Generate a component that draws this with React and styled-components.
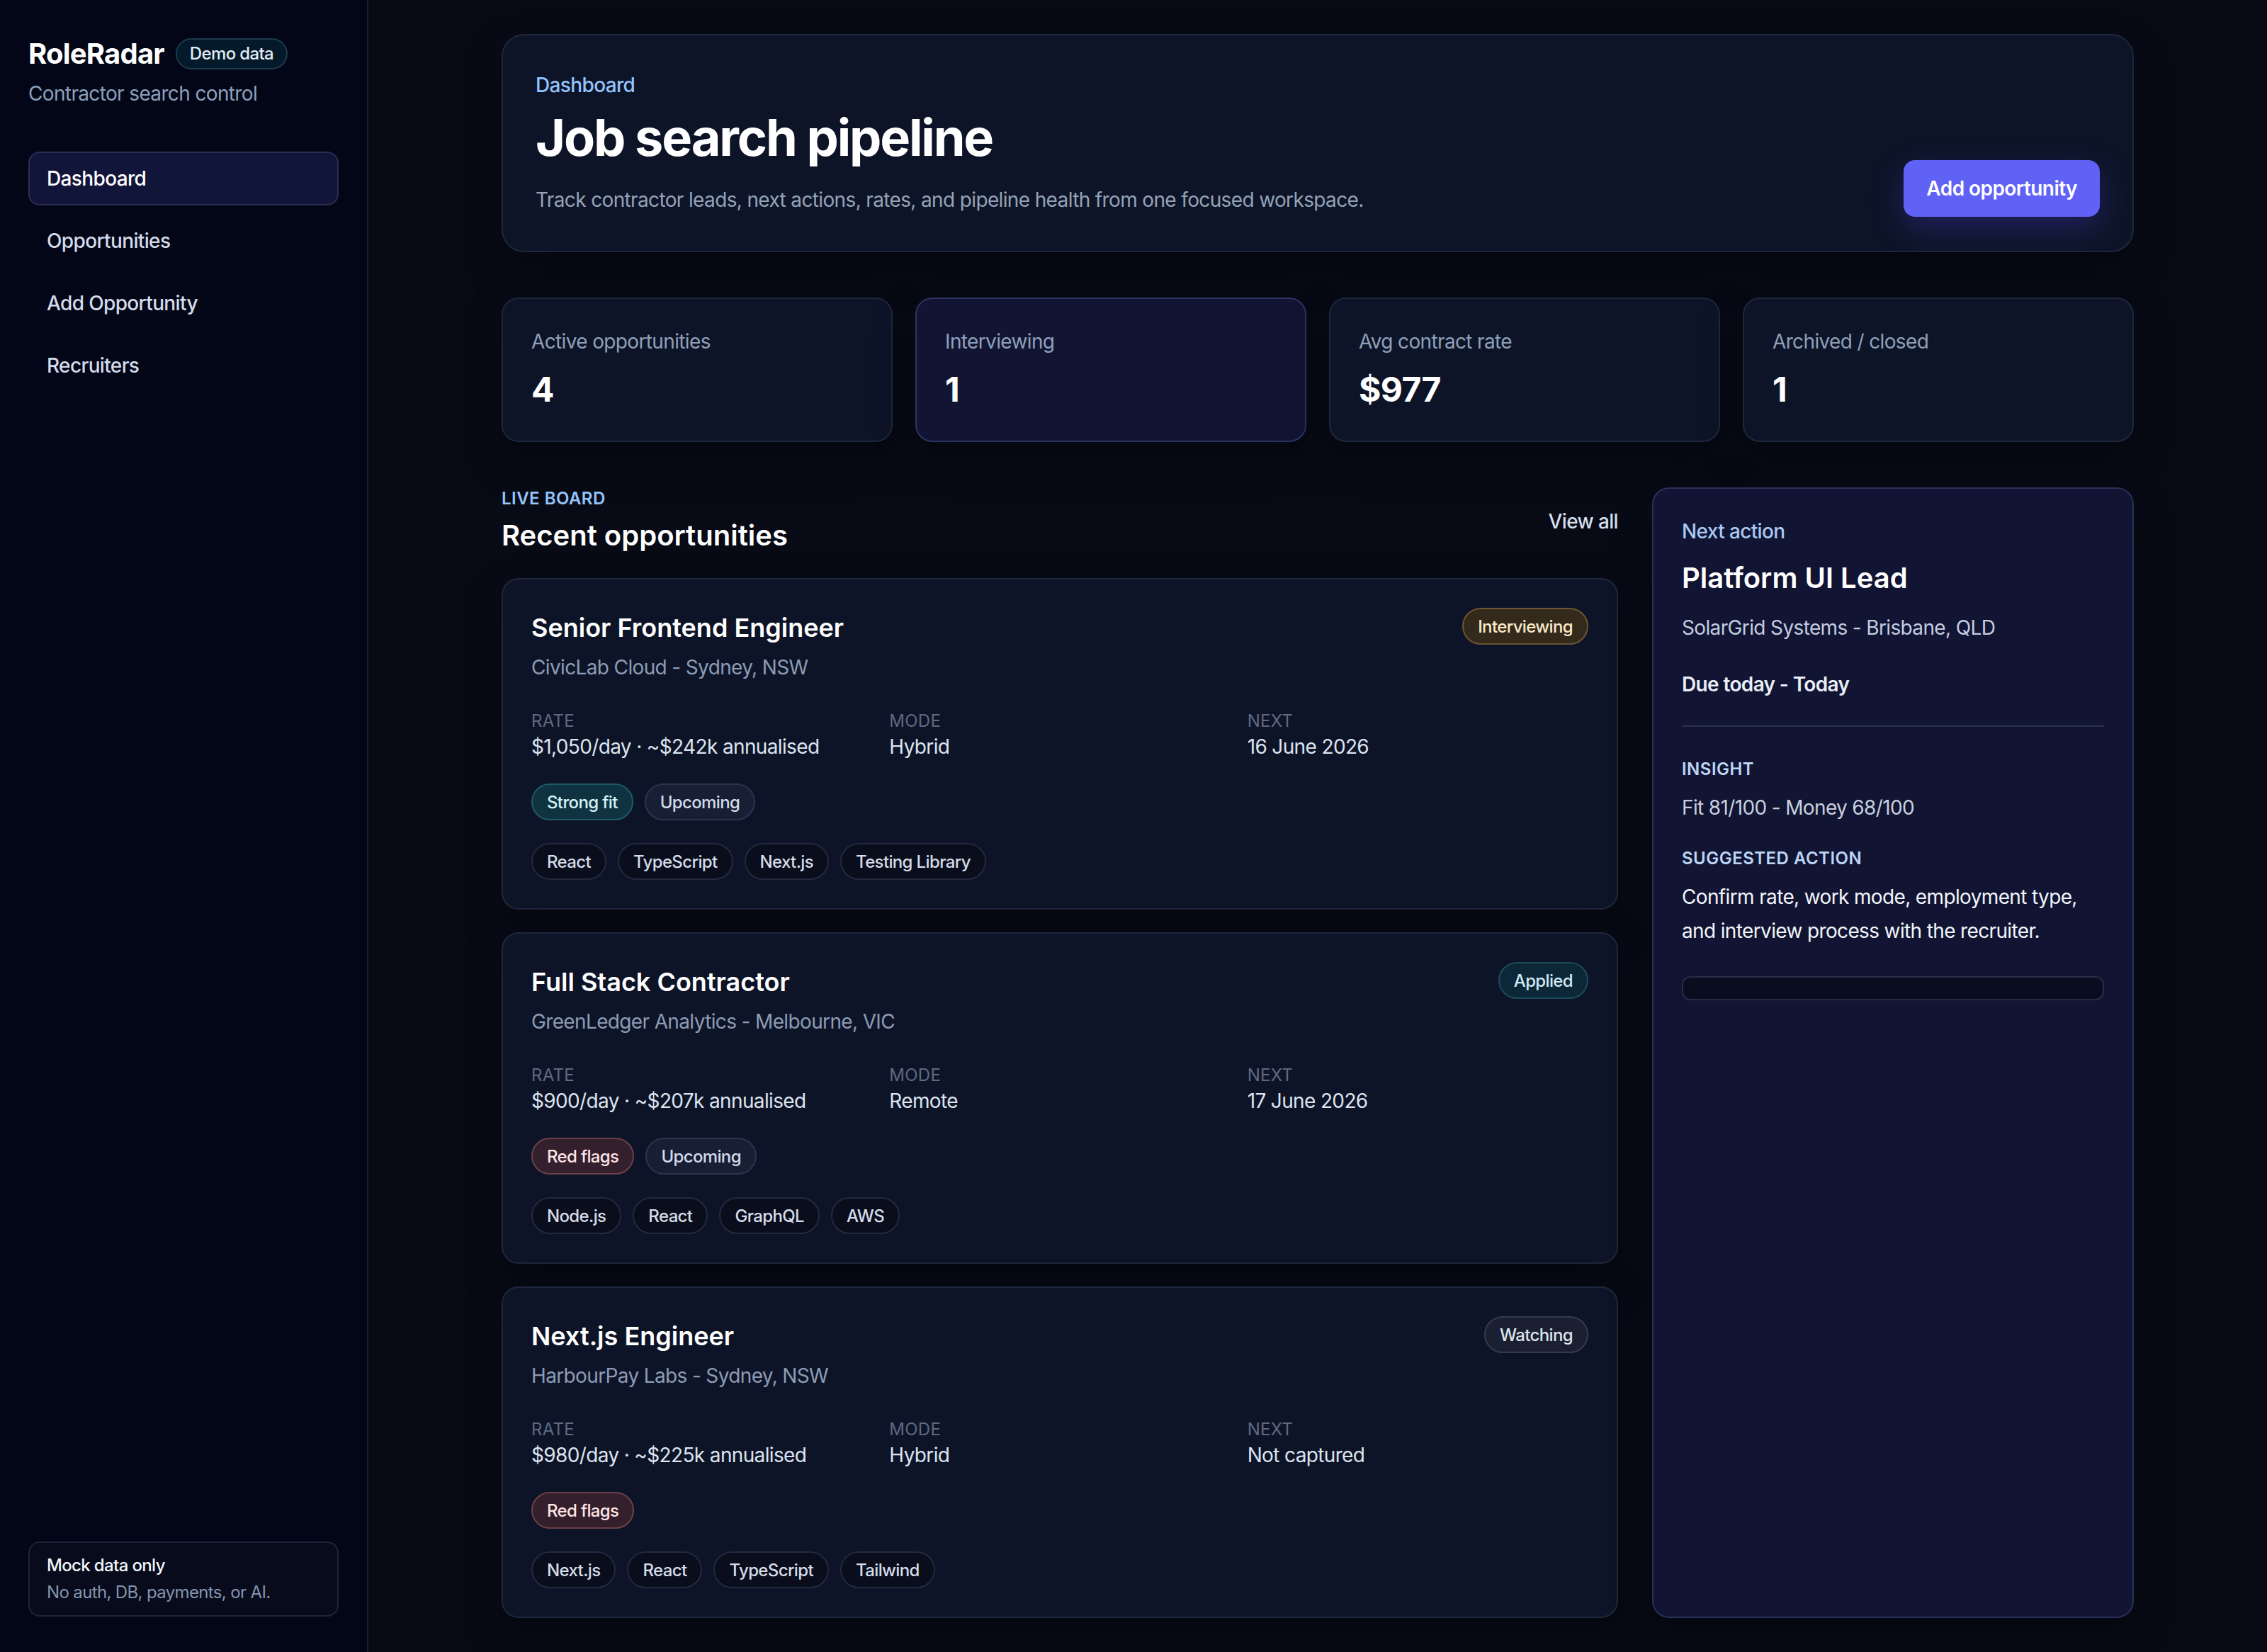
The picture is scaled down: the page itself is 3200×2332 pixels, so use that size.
import React from 'react';
import styled, { createGlobalStyle, css } from 'styled-components';

const GlobalStyle = createGlobalStyle`
  * { box-sizing: border-box; }
  html, body { margin: 0; padding: 0; background: #080b16; }
  body {
    font-family: Inter, "Noto Sans", "Liberation Sans", sans-serif;
    letter-spacing: -0.02em;
    color: #f8fafc;
    -webkit-font-smoothing: antialiased;
  }
  p, h1, h2, h3 { margin: 0; }
`;

const Shell = styled.div`
  zoom: 2;
  display: flex;
  min-height: 1166px;
  background: #080b16;
`;

const Sidebar = styled.aside`
  width: 260px;
  flex-shrink: 0;
  display: flex;
  flex-direction: column;
  padding: 24px 20px 25px;
  background: #030617;
  border-right: 1px solid #181e2e;
`;

const Brand = styled.div`
  display: flex;
  align-items: center;
  gap: 8px;
`;

const Logo = styled.span`
  font-size: 20px;
  line-height: 28px;
  font-weight: 700;
  letter-spacing: -0.02em;
  color: #ffffff;
`;

const DemoPill = styled.span`
  font-size: 12px;
  line-height: 18px;
  font-weight: 500;
  padding: 1px 9px;
  border-radius: 999px;
  color: #e2ecf6;
  background: #041a2a;
  border: 1px solid #1c3b4c;
`;

const Tagline = styled.p`
  margin-top: 4px;
  font-size: 14px;
  line-height: 20px;
  color: #8ea0bb;
`;

const Nav = styled.nav`
  display: flex;
  flex-direction: column;
  gap: 6px;
  margin-top: 31px;
`;

const NavItem = styled.a`
  display: flex;
  align-items: center;
  height: 38px;
  padding: 0 12px;
  border-radius: 8px;
  font-size: 14px;
  font-weight: 500;
  text-decoration: none;
  color: #d3dcea;
  border: 1px solid transparent;
  ${({ $active }) =>
    $active &&
    css`
      color: #ffffff;
      background: #12153a;
      border-color: #2a2f52;
    `}
`;

const MockBox = styled.div`
  margin-top: auto;
  padding: 8px 12px 7px;
  border-radius: 8px;
  background: #070b1b;
  border: 1px solid #1e2439;
`;

const MockTitle = styled.p`
  font-size: 12px;
  line-height: 16px;
  font-weight: 500;
  color: #f1f5fb;
`;

const MockText = styled.p`
  margin-top: 2px;
  font-size: 12px;
  line-height: 18px;
  color: #8394af;
`;

const Main = styled.main`
  flex: 1;
  min-width: 0;
  padding: 24px 0;
`;

const Content = styled.div`
  max-width: 1152px;
  margin: 0 auto;
  display: flex;
  flex-direction: column;
  gap: 32px;
`;

const Panel = styled.section`
  border-radius: 16px;
  background: #0e1427;
  border: 1px solid #1f273d;
  box-shadow: 0 12px 28px rgba(0, 0, 0, 0.35);
`;

const Hero = styled(Panel)`
  display: flex;
  align-items: flex-end;
  justify-content: space-between;
  padding: 25px 23px 24px;
`;

const Eyebrow = styled.p`
  font-size: 14px;
  line-height: 20px;
  font-weight: 500;
  color: #93c5fd;
`;

const Title = styled.h1`
  margin-top: 7px;
  font-size: 36px;
  line-height: 40px;
  font-weight: 700;
  letter-spacing: -0.03em;
  color: #ffffff;
`;

const Lead = styled.p`
  margin-top: 12px;
  font-size: 14px;
  line-height: 24px;
  color: #94a3b8;
`;

const PrimaryButton = styled.button`
  height: 40px;
  padding: 0 16px;
  border: none;
  border-radius: 8px;
  font-family: inherit;
  font-size: 14px;
  font-weight: 600;
  letter-spacing: -0.02em;
  color: #ffffff;
  background: #6062f6;
  box-shadow: 0 8px 22px rgba(79, 70, 229, 0.28);
`;

const Stats = styled.div`
  display: grid;
  grid-template-columns: repeat(4, 1fr);
  gap: 16px;
`;

const StatCard = styled(Panel)`
  border-radius: 12px;
  padding: 20px;
  ${({ $highlight }) =>
    $highlight &&
    css`
      background: #121433;
      border-color: #2c3462;
    `}
`;

const StatLabel = styled.p`
  font-size: 14px;
  line-height: 20px;
  color: #8ea0bb;
`;

const StatValue = styled.p`
  margin-top: 8px;
  font-size: 24px;
  line-height: 32px;
  font-weight: 700;
  color: #ffffff;
`;

const Board = styled.div`
  display: grid;
  grid-template-columns: minmax(0, 1fr) 340px;
  gap: 24px;
  align-items: stretch;
`;

const Column = styled.div`
  display: flex;
  flex-direction: column;
  gap: 16px;
`;

const BoardHead = styled.div`
  display: flex;
  align-items: center;
  justify-content: space-between;
`;

const Kicker = styled.p`
  font-size: 12px;
  line-height: 16px;
  font-weight: 600;
  letter-spacing: 0.02em;
  text-transform: uppercase;
  color: ${({ $tone }) => $tone || '#93c5fd'};
`;

const SectionTitle = styled.h2`
  margin-top: 4px;
  font-size: 20px;
  line-height: 28px;
  font-weight: 600;
  letter-spacing: 0;
  color: #ffffff;
`;

const TextLink = styled.a`
  font-size: 14px;
  font-weight: 500;
  color: #d5deeb;
  text-decoration: none;
`;

const JobCard = styled(Panel)`
  border-radius: 12px;
  padding: 20px;
`;

const JobTop = styled.div`
  display: flex;
  align-items: flex-start;
  justify-content: space-between;
  gap: 16px;
`;

const JobTitle = styled.h3`
  font-size: 18px;
  line-height: 28px;
  font-weight: 600;
  letter-spacing: 0;
  color: #ffffff;
`;

const JobCompany = styled.p`
  margin-top: 4px;
  font-size: 14px;
  line-height: 20px;
  color: #8c9cb6;
`;

const tones = {
  amber: { bg: '#342a1c', border: '#6c5530', color: '#fdebc8' },
  teal: { bg: '#0c2838', border: '#1e4a5c', color: '#cfe9f6' },
  slate: { bg: '#1a2031', border: '#323a50', color: '#dde3ec' },
  fit: { bg: '#0f3340', border: '#1f5966', color: '#d5f3f6' },
  soft: { bg: '#181e33', border: '#2b3350', color: '#d2dbea' },
  rose: { bg: '#33202c', border: '#6c4048', color: '#ffe4e6' },
  tech: { bg: '#090d1c', border: '#222a3f', color: '#d5dce8' },
};

const Chip = styled.span`
  display: inline-flex;
  align-items: center;
  height: 26px;
  padding: 0 10px;
  border-radius: 999px;
  font-size: 12px;
  font-weight: 500;
  white-space: nowrap;
  background: ${({ $tone }) => tones[$tone].bg};
  border: 1px solid ${({ $tone }) => tones[$tone].border};
  color: ${({ $tone }) => tones[$tone].color};
`;

const Meta = styled.div`
  display: grid;
  grid-template-columns: repeat(3, 1fr);
  gap: 12px;
  margin-top: 20px;
`;

const MetaLabel = styled.p`
  font-size: 12px;
  line-height: 16px;
  letter-spacing: 0.01em;
  text-transform: uppercase;
  color: #5d6a82;
`;

const MetaValue = styled.p`
  font-size: 14px;
  line-height: 20px;
  color: #dce4f0;
`;

const ChipRow = styled.div`
  display: flex;
  flex-wrap: wrap;
  gap: 8px;
  margin-top: 16px;
`;

const ActionPanel = styled(Panel)`
  display: flex;
  flex-direction: column;
  padding: 20px;
  border-radius: 12px;
  background: #111432;
  border-color: #2a3058;
`;

const ActionEyebrow = styled(Eyebrow)`
  color: #a9c9f2;
`;

const ActionTitle = styled.h3`
  margin-top: 9px;
  font-size: 20px;
  line-height: 28px;
  font-weight: 600;
  letter-spacing: 0;
  color: #ffffff;
`;

const ActionCompany = styled.p`
  margin-top: 11px;
  font-size: 14px;
  line-height: 20px;
  color: #c3cde0;
`;

const Due = styled.p`
  margin-top: 20px;
  font-size: 14px;
  line-height: 20px;
  font-weight: 600;
  color: #e8edf6;
`;

const Insights = styled.div`
  display: flex;
  flex-direction: column;
  gap: 16px;
  margin-top: 19px;
  padding-top: 22px;
  border-top: 1px solid #2a3052;
`;

const InsightText = styled.p`
  margin-top: 7px;
  font-size: 14px;
  line-height: 24px;
  color: ${({ $strong }) => ($strong ? '#f1f5fb' : '#c7d0df')};
`;

const Track = styled.div`
  height: 17px;
  margin-top: 20px;
  border-radius: 6px;
  background: #0a0d1f;
  border: 1px solid #262c48;
`;

const navItems = ['Dashboard', 'Opportunities', 'Add Opportunity', 'Recruiters'];

const stats = [
  { label: 'Active opportunities', value: '4' },
  { label: 'Interviewing', value: '1', highlight: true },
  { label: 'Avg contract rate', value: '$977' },
  { label: 'Archived / closed', value: '1' },
];

const jobs = [
  {
    title: 'Senior Frontend Engineer',
    company: 'CivicLab Cloud - Sydney, NSW',
    status: { text: 'Interviewing', tone: 'amber' },
    rate: '$1,050/day · ~$242k annualised',
    mode: 'Hybrid',
    next: '16 June 2026',
    flags: [
      { text: 'Strong fit', tone: 'fit' },
      { text: 'Upcoming', tone: 'soft' },
    ],
    stack: ['React', 'TypeScript', 'Next.js', 'Testing Library'],
  },
  {
    title: 'Full Stack Contractor',
    company: 'GreenLedger Analytics - Melbourne, VIC',
    status: { text: 'Applied', tone: 'teal' },
    rate: '$900/day · ~$207k annualised',
    mode: 'Remote',
    next: '17 June 2026',
    flags: [
      { text: 'Red flags', tone: 'rose' },
      { text: 'Upcoming', tone: 'soft' },
    ],
    stack: ['Node.js', 'React', 'GraphQL', 'AWS'],
  },
  {
    title: 'Next.js Engineer',
    company: 'HarbourPay Labs - Sydney, NSW',
    status: { text: 'Watching', tone: 'slate' },
    rate: '$980/day · ~$225k annualised',
    mode: 'Hybrid',
    next: 'Not captured',
    flags: [{ text: 'Red flags', tone: 'rose' }],
    stack: ['Next.js', 'React', 'TypeScript', 'Tailwind'],
  },
];

const OpportunityCard = ({ job }) => (
  <JobCard>
    <JobTop>
      <div>
        <JobTitle>{job.title}</JobTitle>
        <JobCompany>{job.company}</JobCompany>
      </div>
      <Chip $tone={job.status.tone}>{job.status.text}</Chip>
    </JobTop>
    <Meta>
      <div>
        <MetaLabel>Rate</MetaLabel>
        <MetaValue>{job.rate}</MetaValue>
      </div>
      <div>
        <MetaLabel>Mode</MetaLabel>
        <MetaValue>{job.mode}</MetaValue>
      </div>
      <div>
        <MetaLabel>Next</MetaLabel>
        <MetaValue>{job.next}</MetaValue>
      </div>
    </Meta>
    <ChipRow>
      {job.flags.map((flag) => (
        <Chip key={flag.text} $tone={flag.tone}>
          {flag.text}
        </Chip>
      ))}
    </ChipRow>
    <ChipRow>
      {job.stack.map((tech) => (
        <Chip key={tech} $tone="tech">
          {tech}
        </Chip>
      ))}
    </ChipRow>
  </JobCard>
);

const App = () => {
  return (
    <>
      <GlobalStyle />
      <Shell>
        <Sidebar>
          <Brand>
            <Logo>RoleRadar</Logo>
            <DemoPill>Demo data</DemoPill>
          </Brand>
          <Tagline>Contractor search control</Tagline>
          <Nav>
            {navItems.map((item, i) => (
              <NavItem key={item} href="#" $active={i === 0}>
                {item}
              </NavItem>
            ))}
          </Nav>
          <MockBox>
            <MockTitle>Mock data only</MockTitle>
            <MockText>No auth, DB, payments, or AI.</MockText>
          </MockBox>
        </Sidebar>

        <Main>
          <Content>
            <Hero>
              <div>
                <Eyebrow>Dashboard</Eyebrow>
                <Title>Job search pipeline</Title>
                <Lead>Track contractor leads, next actions, rates, and pipeline health from one focused workspace.</Lead>
              </div>
              <PrimaryButton>Add opportunity</PrimaryButton>
            </Hero>

            <Stats>
              {stats.map((stat) => (
                <StatCard key={stat.label} $highlight={stat.highlight}>
                  <StatLabel>{stat.label}</StatLabel>
                  <StatValue>{stat.value}</StatValue>
                </StatCard>
              ))}
            </Stats>

            <Board>
              <Column>
                <BoardHead>
                  <div>
                    <Kicker>Live board</Kicker>
                    <SectionTitle>Recent opportunities</SectionTitle>
                  </div>
                  <TextLink href="#">View all</TextLink>
                </BoardHead>
                {jobs.map((job) => (
                  <OpportunityCard key={job.title} job={job} />
                ))}
              </Column>

              <ActionPanel>
                <ActionEyebrow>Next action</ActionEyebrow>
                <ActionTitle>Platform UI Lead</ActionTitle>
                <ActionCompany>SolarGrid Systems - Brisbane, QLD</ActionCompany>
                <Due>Due today - Today</Due>
                <Insights>
                  <div>
                    <Kicker $tone="#bcd5f6">Insight</Kicker>
                    <InsightText>Fit 81/100 - Money 68/100</InsightText>
                  </div>
                  <div>
                    <Kicker $tone="#bcd5f6">Suggested action</Kicker>
                    <InsightText $strong>
                      Confirm rate, work mode, employment type, and interview process with the recruiter.
                    </InsightText>
                  </div>
                </Insights>
                <Track />
              </ActionPanel>
            </Board>
          </Content>
        </Main>
      </Shell>
    </>
  );
};

export default App;
